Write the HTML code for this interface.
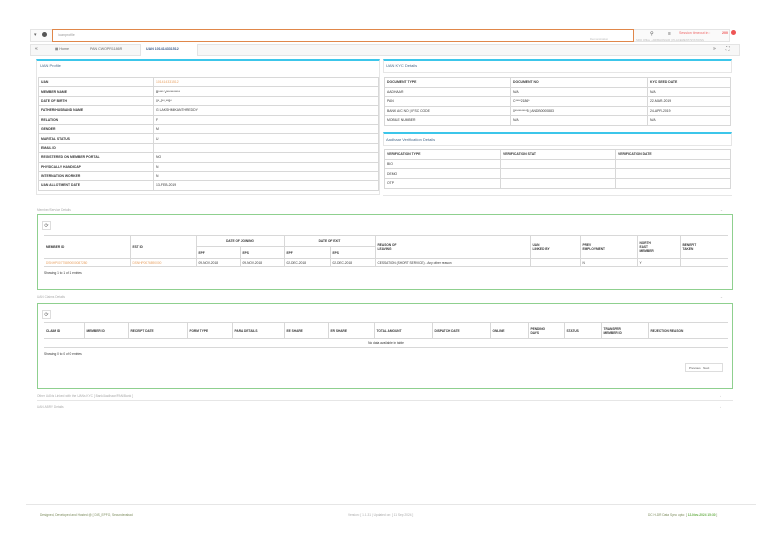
<!DOCTYPE html>
<html><head><meta charset="utf-8"><style>
*{margin:0;padding:0;box-sizing:border-box}
body{width:768px;height:543px;background:#fff;font-family:"Liberation Sans",sans-serif;position:relative;overflow:hidden;color:#333}
.a{position:absolute}
.t{font-size:3.6px;white-space:nowrap}
.b{font-weight:bold}
table{border-collapse:collapse;position:absolute;font-size:3.4px}
td,th{border:1px solid #d8d8d8;padding:0 2px;text-align:left;white-space:nowrap}
th{font-weight:bold;color:#333}
.or{color:#e8a060}
.cy{border-top:2px solid #3cc6ea !important}
.pan{border:1px solid #e6e6e6}
.gr{border:1px solid #8fd08f}
.hdr{font-size:3.8px;color:#aaa}
</style></head><body>
<!-- top bar -->
<div class="a" style="left:30px;top:29px;width:700px;height:13px;border:1px solid #e4e4e4;background:#fafafa"></div>
<div class="a t" style="left:34px;top:32px;font-size:5px;color:#666">▾</div>
<div class="a" style="left:42px;top:32px;width:5px;height:5px;border-radius:50%;background:#555"></div>
<div class="a" style="left:52px;top:29px;width:582px;height:13px;border:1px solid #e0874a;border-top-width:1.5px;background:#fff"></div>
<div class="a t" style="left:58px;top:33px;color:#999">/uanprofile</div>
<div class="a t" style="left:590px;top:37px;color:#bbb;font-size:2.8px">Demonstration</div>
<div class="a t" style="left:650px;top:31px;font-size:5px;color:#555">⚲</div>
<div class="a t" style="left:668px;top:31px;font-size:5px;color:#555">≡</div>
<div class="a t" style="left:636px;top:38px;color:#bbb;font-size:2.8px">SRO Office - ARIBHONGIR | PLACEMENT/STATIONS</div>
<div class="a t" style="left:679px;top:31px;color:#e66;font-size:3.6px">Session timeout in :</div>
<div class="a t b" style="left:722px;top:31px;color:#e55">200</div>
<div class="a" style="left:731px;top:30px;width:5px;height:5px;border-radius:50%;background:#e55"></div>
<!-- tab bar -->
<div class="a" style="left:30px;top:44px;width:710px;height:12px;border:1px solid #e4e4e4;background:#f7f7f7"></div>
<div class="a t" style="left:35px;top:46px;font-size:5px;color:#555">«</div>
<div class="a t" style="left:55px;top:47px;color:#666">▦ Home</div>
<div class="a t" style="left:90px;top:47px;color:#666">PAN CWOPR1186R</div>
<div class="a" style="left:140px;top:44px;width:58px;height:12px;background:#fff;border-left:1px solid #e4e4e4;border-right:1px solid #e4e4e4"></div>
<div class="a t b" style="left:146px;top:47px;color:#3a5a8a">UAN 101414331512</div>
<div class="a t" style="left:713px;top:46px;font-size:5px;color:#555">»</div>
<div class="a t" style="left:726px;top:46px;font-size:5px;color:#555">⛶</div>
<!-- UAN profile -->
<div class="a cy pan" style="left:36px;top:59px;width:344px;height:136px"></div>
<div class="a t" style="left:40px;top:63px;font-size:4px;color:#4a6a8a">UAN Profile</div>
<table style="left:38px;top:77px;width:341px">
<col style="width:115px"><col>
<tr style="height:9.4px"><th>UAN</th><td class="or">101414331512</td></tr>
<tr style="height:9.4px"><th>MEMBER NAME</th><td>B**** V**********</td></tr>
<tr style="height:9.4px"><th>DATE OF BIRTH</th><td>0*-J**-**9*</td></tr>
<tr style="height:9.4px"><th>FATHER/HUSBAND NAME</th><td>G LAKSHMIKANTHREDDY</td></tr>
<tr style="height:9.4px"><th>RELATION</th><td>F</td></tr>
<tr style="height:9.4px"><th>GENDER</th><td>M</td></tr>
<tr style="height:9.4px"><th>MARITAL STATUS</th><td>U</td></tr>
<tr style="height:9.4px"><th>EMAIL ID</th><td></td></tr>
<tr style="height:9.4px"><th>REGISTERED ON MEMBER PORTAL</th><td>NO</td></tr>
<tr style="height:9.4px"><th>PHYSICALLY HANDICAP</th><td>N</td></tr>
<tr style="height:9.4px"><th>INTERNATION WORKER</th><td>N</td></tr>
<tr style="height:9.4px"><th>UAN ALLOTMENT DATE</th><td>13-FEB-2019</td></tr>
</table>
<!-- KYC -->
<div class="a cy pan" style="left:383px;top:59px;width:349px;height:14px"></div>
<div class="a t" style="left:386px;top:63px;font-size:4px;color:#4a6a8a">UAN KYC Details</div>
<table style="left:384px;top:77px;width:347px">
<col style="width:126px"><col style="width:137px"><col>
<tr style="height:9.5px"><th>DOCUMENT TYPE</th><th>DOCUMENT NO</th><th>KYC SEED DATE</th></tr>
<tr style="height:9.5px"><td>AADHAAR</td><td>N/A</td><td>N/A</td></tr>
<tr style="height:9.5px"><td>PAN</td><td>C****2186*</td><td>22-MAR-2019</td></tr>
<tr style="height:9.5px"><td>BANK A/C NO | IFSC CODE</td><td>0*********5 | ANDB0000883</td><td>24-APR-2019</td></tr>
<tr style="height:9.5px"><td>MOBILE NUMBER</td><td>N/A</td><td>N/A</td></tr>
</table>
<div class="a cy pan" style="left:383px;top:132px;width:349px;height:14px"></div>
<div class="a t" style="left:386px;top:137px;font-size:4px;color:#4a6a8a">Aadhaar Verification Details</div>
<table style="left:384px;top:149px;width:347px">
<col style="width:116px"><col style="width:115px"><col>
<tr style="height:9.7px"><th>VERIFICATION TYPE</th><th>VERIFICATION STAT</th><th>VERIFICATION DATE</th></tr>
<tr style="height:9.7px"><td>BIO</td><td></td><td></td></tr>
<tr style="height:9.7px"><td>DEMO</td><td></td><td></td></tr>
<tr style="height:9.7px"><td>OTP</td><td></td><td></td></tr>
</table>
<div class="a" style="left:383px;top:195px;width:349px;height:1px;background:#e6e6e6"></div>
<!-- Member service -->
<div class="a t hdr" style="left:37px;top:208px;font-size:3.2px">Member/Service Details</div>
<div class="a t" style="left:720px;top:208px;color:#aaa">⌄</div>
<div class="a gr" style="left:37px;top:214px;width:696px;height:76px"></div>
<div class="a" style="left:42px;top:221px;width:9px;height:9px;border:1px solid #ddd;font-size:5px;text-align:center;line-height:8px;color:#555">⟳</div>
<table style="left:44px;top:235px;width:684px;font-size:3.2px">
<col style="width:86px"><col style="width:66px"><col style="width:44px"><col style="width:44px"><col style="width:46px"><col style="width:45px"><col style="width:155px"><col style="width:50px"><col style="width:57px"><col style="width:43px"><col>
<tr style="height:11px"><th rowspan="2" style="border-left:none">MEMBER ID</th><th rowspan="2">EST ID</th><th colspan="2" style="text-align:center">DATE OF JOINING</th><th colspan="2" style="text-align:center">DATE OF EXIT</th><th rowspan="2">REASON OF<br>LEAVING</th><th rowspan="2">UAN<br>LINKED BY</th><th rowspan="2">PREV<br>EMPLOYMENT</th><th rowspan="2">NORTH<br>EAST<br>MEMBER</th><th rowspan="2" style="border-right:none">BENEFIT<br>TAKEN</th></tr>
<tr style="height:12px"><th>EPF</th><th>EPS</th><th>EPF</th><th>EPS</th></tr>
<tr style="height:8px"><td class="or" style="border-left:none">DSNHP00775890000087280</td><td class="or">DSNHP0076890000</td><td>09-NOV-2018</td><td>09-NOV-2018</td><td>02-DEC-2018</td><td>02-DEC-2018</td><td>CESSATION (SHORT SERVICE) - Any other reason</td><td></td><td>N</td><td>Y</td><td style="border-right:none"></td></tr>
</table>
<div class="a t" style="left:44px;top:271px;font-size:3.2px">Showing 1 to 1 of 1 entries</div>
<!-- Claims -->
<div class="a t hdr" style="left:37px;top:295px;font-size:3.2px">UAN Claims Details</div>
<div class="a t" style="left:720px;top:295px;color:#aaa">⌄</div>
<div class="a gr" style="left:37px;top:303px;width:696px;height:86px"></div>
<div class="a" style="left:42px;top:310px;width:9px;height:9px;border:1px solid #ddd;font-size:5px;text-align:center;line-height:8px;color:#555">⟳</div>
<table style="left:44px;top:322px;width:684px;font-size:3.2px">
<col style="width:40px"><col style="width:44px"><col style="width:59px"><col style="width:45px"><col style="width:52px"><col style="width:44px"><col style="width:46px"><col style="width:58px"><col style="width:58px"><col style="width:38px"><col style="width:36px"><col style="width:37px"><col style="width:47px"><col>
<tr style="height:16px"><th style="border-left:none">CLAIM ID</th><th>MEMBER ID</th><th>RECEIPT DATE</th><th>FORM TYPE</th><th>PARA DETAILS</th><th>EE SHARE</th><th>ER SHARE</th><th>TOTAL AMOUNT</th><th>DISPATCH DATE</th><th>ONLINE</th><th>PENDING<br>DAYS</th><th>STATUS</th><th>TRANSFER<br>MEMBER ID</th><th style="border-right:none">REJECTION REASON</th></tr>
<tr style="height:9px"><td colspan="14" style="text-align:center;border-left:none;border-right:none">No data available in table</td></tr>
</table>
<div class="a t" style="left:44px;top:352px;font-size:3.2px">Showing 0 to 0 of 0 entries</div>
<div class="a t" style="left:685px;top:363px;width:38px;height:9px;border:1px solid #ddd;font-size:3px;line-height:8px;padding-left:3px;color:#555">Previous&nbsp;&nbsp;&nbsp;Next</div>
<div class="a t hdr" style="left:37px;top:394px;font-size:3.2px">Other UANs Linked with the UANs KYC [ Bank/Aadhaar/PAN/Bank ]</div>
<div class="a" style="left:37px;top:400px;width:696px;height:1px;background:#e6e6e6"></div>
<div class="a t" style="left:720px;top:394px;color:#aaa;font-size:3px">›</div>
<div class="a t hdr" style="left:37px;top:405px;font-size:3.2px">UAN ABRY Details</div>
<div class="a t" style="left:720px;top:405px;color:#aaa;font-size:3px">›</div>
<!-- footer -->
<div class="a" style="left:26px;top:504px;width:730px;height:1px;background:#e6e6e6"></div>
<div class="a t" style="left:40px;top:513px;font-size:3.2px;color:#7a8a5a">Designed, Developed and Hosted @ [ DIS_EPFO, Secunderabad</div>
<div class="a t" style="left:348px;top:513px;font-size:3.2px;color:#aaa">Version: [ 1.1.31 | Updated on: [ 11 Sep 2024 ]</div>
<div class="a t" style="left:648px;top:513px;font-size:3.2px;color:#7a8a5a">DC H-DR Data Sync upto: [ <span style="color:#6ab04a;font-weight:bold">12-Nov-2024 15:30</span> ]</div>
</body></html>
